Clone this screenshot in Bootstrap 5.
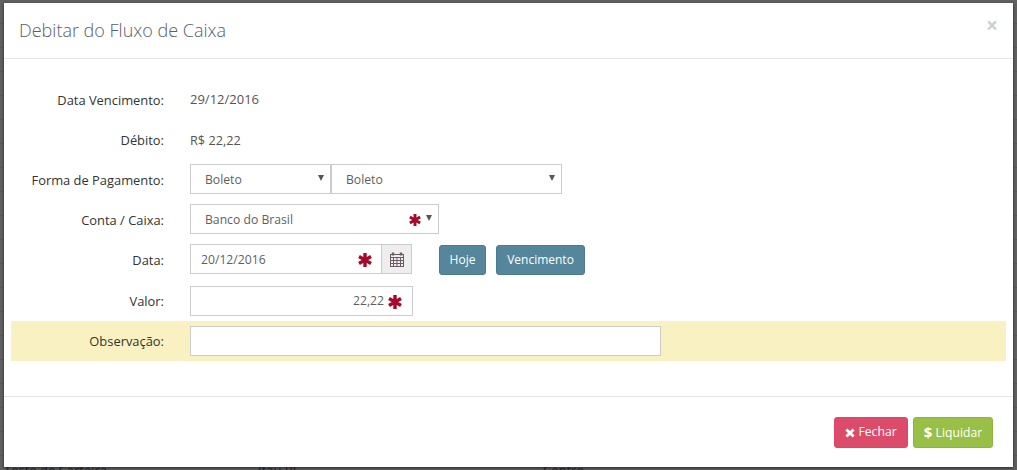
<!DOCTYPE html>
<html lang="en">
<head>
  <meta charset="UTF-8">
  <title>Debitar do Fluxo de Caixa</title>
  <link href="https://cdn.jsdelivr.net/npm/bootstrap@5.3.3/dist/css/bootstrap.min.css" rel="stylesheet">
  <style>
    html, body { height: 100%; overflow: hidden; }
    body {
      font-family: "Open Sans", sans-serif;
      font-size: 12.7px;
      color: #555;
      background: repeating-linear-gradient(to bottom, #616161 0, #616161 23px, #575757 23px, #575757 24px);
    }
    .backdrop-wrap { height: 470px; padding: 3px 4px; position: relative; }
    .behind-row {
      position: absolute; left: 4px; top: 461px;
      font-size: 13px; color: #26262c; white-space: nowrap;
    }
    .behind-row span { display: inline-block; }
    .behind-a { width: 254px; }
    .behind-b { width: 285px; }
    .dlg {
      position: relative;
      height: 464px;
      width: 1009px;
      background: #fff;
      box-shadow: 0 1px 3px rgba(0,0,0,.6);
    }
    .dlg-head {
      height: 56px;
      padding: 0 15px;
      border-bottom: 1px solid #e5e5e5;
    }
    .dlg-title { font-size: 18px; font-weight: 300; color: #56606c; margin: 0; }
    .dlg-close { color: #cfcfcf; font-size: 21px; font-weight: 700; line-height: 1; background: none; border: 0; padding: 0; margin-top: -11px; }
    .dlg-body { padding: 21px 7px 35px; height: 337px; }
    .line { height: 40px; }
    .line-tall { height: 41px; }
    .line-label { width: 153px; text-align: right; color: #333; margin-right: 26px; flex: none; padding-top: 2px; font-size: 12.9px; }
    .line-date { font-size: 13px; }
    .line-value-low { padding-top: 2px; }
    .line-note { background: #f9f1c2; }
    .fake-field {
      height: 30px;
      background: #fff;
      border: 1px solid #ccc;
      color: #5f5f5f;
      flex: none;
      font-size: 12.2px;
    }
    .lift { margin-bottom: 2px; padding-top: 2px; }
    .fake-select { padding-left: 14px; padding-right: 14px; position: relative; }
    .caret-mark {
      position: absolute; right: 6px; top: 10px;
      width: 0; height: 0;
      border-left: 3.5px solid transparent;
      border-right: 3.5px solid transparent;
      border-top: 6px solid #555;
    }
    .w-a { width: 141px; }
    .w-b { width: 231px; }
    .w-c { width: 249px; }
    .w-d { width: 192px; padding-left: 10px; padding-right: 9px; }
    .addon { width: 30px; height: 30px; background: #eee; border: 1px solid #ccc; border-left: 0; flex: none; margin-bottom: 2px; }
    .w-e { width: 223px; padding-right: 10px; }
    .w-f { width: 471px; }
    .star-lg { width: 14px; height: 14px; flex: none; }
    .star-sm { width: 12px; height: 12px; position: absolute; right: 17px; top: 9px; }
    .btn-teal {
      background: #55869c; border: 1px solid #4c7a8e; color: #fff;
      font-size: 12px; height: 30px; padding: 0; border-radius: 3px; line-height: 1;
    }
    .btn-today { margin-left: 27px; margin-right: 10px; width: 47px; }
    .btn-due { width: 89px; }
    .dlg-foot { height: 71px; padding-right: 20px; border-top: 1px solid #e5e5e5; }
    .btn-close-red, .btn-pay {
      color: #fff; font-size: 12.2px; height: 31px; border-radius: 3px; padding: 0; line-height: 1;
    }
    .btn-close-red { background: #dd4b6b; border: 1px solid #d9486a; width: 74px; }
    .btn-pay { background: #98bf46; border: 1px solid #8fb53f; width: 80px; }
    .pay-sign { font-weight: 700; font-size: 15px; vertical-align: -1px; }
    .foot-gap { gap: 5px; }
  </style>
</head>
<body>
  <div class="backdrop-wrap">
    <div class="behind-row"><span class="behind-a">Teste de Carteira</span><span class="behind-b">Itaú PJ</span><span>Centro</span></div>
    <div class="dlg d-flex flex-column">
      <div class="dlg-head d-flex align-items-center justify-content-between">
        <h4 class="dlg-title">Debitar do Fluxo de Caixa</h4>
        <button class="dlg-close" type="button">&times;</button>
      </div>
      <div class="dlg-body">
        <div class="line d-flex align-items-center">
          <div class="line-label">Data Vencimento:</div>
          <div class="line-date">29/12/2016</div>
        </div>
        <div class="line d-flex align-items-center">
          <div class="line-label">Débito:</div>
          <div class="line-value-low">R$ 22,22</div>
        </div>
        <div class="line d-flex align-items-center">
          <div class="line-label">Forma de Pagamento:</div>
          <div class="fake-field fake-select lift w-a d-flex align-items-center">Boleto<span class="caret-mark"></span></div>
          <div class="fake-field fake-select lift w-b d-flex align-items-center">Boleto<span class="caret-mark"></span></div>
        </div>
        <div class="line d-flex align-items-center">
          <div class="line-label">Conta / Caixa:</div>
          <div class="fake-field fake-select lift w-c d-flex align-items-center">Banco do Brasil
            <svg class="star-sm" viewBox="0 0 14 14"><path d="M7 0v14M1 3.5l12 7M13 3.5l-12 7" stroke="#a50a2d" stroke-width="3.4"/></svg>
            <span class="caret-mark"></span>
          </div>
        </div>
        <div class="line d-flex align-items-center">
          <div class="line-label">Data:</div>
          <div class="fake-field lift w-d d-flex align-items-center justify-content-between">20/12/2016
            <svg class="star-lg" viewBox="0 0 14 14"><path d="M7 0v14M1 3.5l12 7M13 3.5l-12 7" stroke="#a50a2d" stroke-width="3.4"/></svg>
          </div>
          <div class="addon d-flex align-items-center justify-content-center">
            <svg width="14" height="15" viewBox="0 0 14 15" fill="none" stroke="#6b5a66"><rect x=".5" y="2.5" width="13" height="12"/><path d="M.5 5.5h13M.5 8.5h13M.5 11.5h13M3.5 5.5v9M7 5.5v9M10.5 5.5v9"/><path d="M3 .5v3M11 .5v3" stroke-width="2.4"/></svg>
          </div>
          <button class="btn btn-teal btn-today" type="button">Hoje</button>
          <button class="btn btn-teal btn-due" type="button">Vencimento</button>
        </div>
        <div class="line line-tall d-flex align-items-center">
          <div class="line-label">Valor:</div>
          <div class="fake-field line-value-low w-e d-flex align-items-center justify-content-end gap-1">22,22
            <svg class="star-lg" viewBox="0 0 14 14"><path d="M7 0v14M1 3.5l12 7M13 3.5l-12 7" stroke="#a50a2d" stroke-width="3.4"/></svg>
          </div>
        </div>
        <div class="line line-note d-flex align-items-center">
          <div class="line-label">Observação:</div>
          <div class="fake-field w-f"></div>
        </div>
      </div>
      <div class="dlg-foot d-flex align-items-center justify-content-end foot-gap">
        <button class="btn btn-close-red" type="button">
          <svg width="10" height="10" viewBox="0 0 10 10"><path d="M1.4 1.4l7.2 7.2M8.6 1.4l-7.2 7.2" stroke="#fff" stroke-width="2.8"/></svg>
          Fechar
        </button>
        <button class="btn btn-pay" type="button"><span class="pay-sign">$</span> Liquidar</button>
      </div>
    </div>
  </div>
</body>
</html>
